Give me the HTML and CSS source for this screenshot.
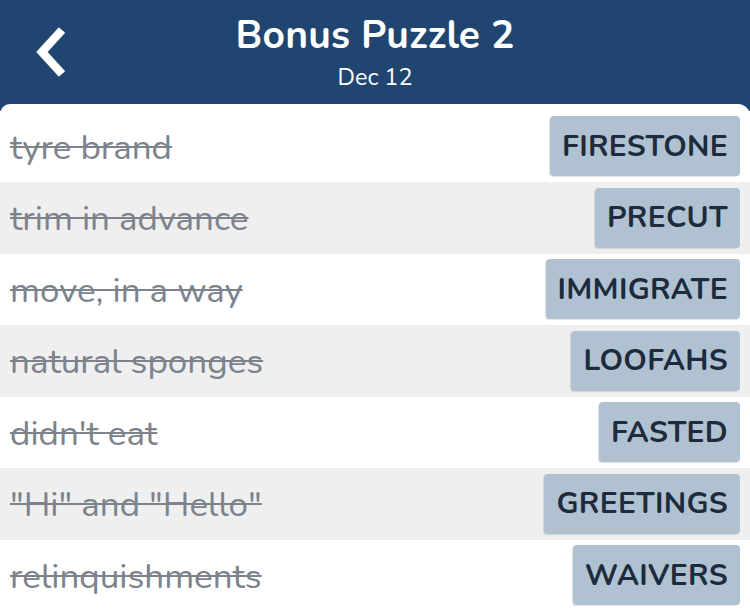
FILE: index.html
```html
<!DOCTYPE html>
<html>
<head>
<meta charset="utf-8">
<link rel="stylesheet" href="styles.css">
</head>
<body>
<div class="app">
  <header class="topbar">
    <div class="back">
      <svg width="40" height="60" viewBox="0 0 40 60"><polyline points="27,6 7,28 27,50" fill="none" stroke="#fff" stroke-width="8.5" stroke-linecap="butt" stroke-linejoin="miter"/></svg>
    </div>
    <div class="titles">
      <div class="title">Bonus Puzzle 2</div>
      <div class="subtitle">Dec 12</div>
    </div>
  </header>
  <main class="card">
    <div class="row"><span class="clue">tyre brand</span><span class="answer">FIRESTONE</span></div>
    <div class="row alt"><span class="clue">trim in advance</span><span class="answer">PRECUT</span></div>
    <div class="row"><span class="clue">move, in a way</span><span class="answer">IMMIGRATE</span></div>
    <div class="row alt"><span class="clue">natural sponges</span><span class="answer">LOOFAHS</span></div>
    <div class="row"><span class="clue">didn't eat</span><span class="answer">FASTED</span></div>
    <div class="row alt"><span class="clue">"Hi" and "Hello"</span><span class="answer">GREETINGS</span></div>
    <div class="row"><span class="clue">relinquishments</span><span class="answer">WAIVERS</span></div>
  </main>
</div>
</body>
</html>
```
FILE: styles.css
```css
* { box-sizing: border-box; }
html, body { margin: 0; padding: 0; }
body {
  background: #1f4570;
  font-family: "Nunito", Lato, "Open Sans", sans-serif;
  width: 750px;
  height: 611px;
  overflow: hidden;
}
.app { display: flex; flex-direction: column; }
.topbar {
  height: 104px;
  background: #1f4570;
  position: relative;
  display: flex;
  justify-content: center;
  color: #fff;
}
.back {
  position: absolute;
  left: 35px;
  top: 24px;
}
.back svg { display: block; }
.titles {
  display: flex;
  flex-direction: column;
  align-items: center;
  padding-top: 13px;
}
.title {
  font-size: 39px;
  font-weight: 700;
  line-height: 46px;
  letter-spacing: 0.2px;
}
.subtitle {
  font-size: 23.5px;
  line-height: 30px;
  margin-top: 3px;
}
.card {
  background: #fff;
  border-radius: 10px 12px 0 0;
  padding-top: 6.5px;
  display: flex;
  flex-direction: column;
}
.row {
  height: 71.5px;
  display: flex;
  align-items: center;
  justify-content: space-between;
  padding: 0 10px;
  background: #fff;
}
.row.alt { background: #efefef; }
.clue {
  font-size: 35px;
  color: #7d838c;
  text-decoration: line-through;
  text-decoration-thickness: 2px;
  line-height: 1;
  margin-top: 2px;
}
.answer {
  height: 60px;
  display: flex;
  align-items: center;
  padding: 0 12px;
  background: #b0c2d1;
  border-radius: 4px;
  color: #1d2b3d;
  font-weight: 700;
  font-size: 30px;
  letter-spacing: 0.3px;
  box-shadow: -1px 1px 1px rgba(0,0,0,0.12);
}
```
